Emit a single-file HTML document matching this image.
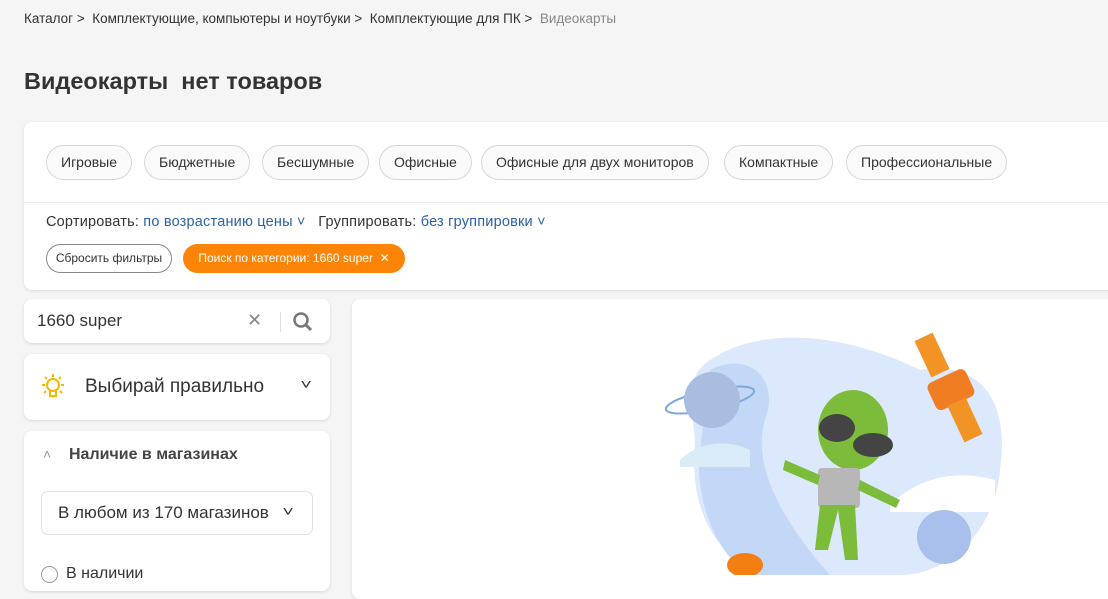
<!DOCTYPE html>
<html><head><meta charset="utf-8"><style>
*{box-sizing:border-box;margin:0;padding:0}
body{width:1108px;height:575px;overflow:hidden;background:#f5f5f5;font-family:"Liberation Sans","Noto Sans CJK SC",sans-serif;color:#333;position:relative}
.abs{position:absolute}
.bc{top:11px;left:24px;font-size:13.5px;color:#333}
.bc span{color:#888}
h1{position:absolute;top:68px;left:24px;font-size:23.5px;font-weight:bold;color:#333}
.card{position:absolute;background:#fff;border-radius:8px;box-shadow:0 1px 3px rgba(0,0,0,.12)}
.tag{position:absolute;top:145px;height:35px;border:1px solid #d6d6d6;border-radius:18px;font-size:14px;line-height:33px;padding:0 14px;color:#333;background:#fafafa}
.lnk{color:#2a61a8}
</style></head><body>
<div class="abs bc">Каталог &gt;&nbsp; Комплектующие, компьютеры и ноутбуки &gt;&nbsp; Комплектующие для ПК &gt;&nbsp; <span>Видеокарты</span></div>
<h1>Видеокарты&nbsp; нет товаров</h1>
<div class="card" style="left:24px;top:122px;width:1100px;height:168px"></div>
<div class="tag" style="left:46px">Игровые</div>
<div class="tag" style="left:144px">Бюджетные</div>
<div class="tag" style="left:262px">Бесшумные</div>
<div class="tag" style="left:379px">Офисные</div>
<div class="tag" style="left:481px">Офисные для двух мониторов</div>
<div class="tag" style="left:724px">Компактные</div>
<div class="tag" style="left:846px">Профессиональные</div>
<div class="abs" style="left:24px;top:202px;width:1084px;border-top:1px solid #eee"></div>
<div class="abs" style="left:46px;top:214px;font-size:14.5px;letter-spacing:0.2px">Сортировать: <span class="lnk">по возрастанию цены ˅</span>&nbsp;&nbsp; Группировать: <span class="lnk">без группировки ˅</span></div>
<div class="abs" style="left:46px;top:244px;width:126px;height:29px;border:1px solid #888;border-radius:15px;font-size:12px;line-height:27px;text-align:center">Сбросить фильтры</div>
<div class="abs" style="left:183px;top:244px;width:222px;height:29px;background:#fc8507;border-radius:15px;font-size:12px;line-height:29px;text-align:center;color:#fff">Поиск по категории: 1660 super&nbsp; ✕</div>
<div class="card" style="left:24px;top:299px;width:306px;height:44px"></div>
<div class="abs" style="left:37px;top:311px;font-size:17px">1660 super</div>
<div class="abs" style="left:247px;top:310px;font-size:18px;color:#888">✕</div>
<div class="abs" style="left:280px;top:312px;height:20px;border-left:1px solid #ddd"></div>
<svg class="abs" style="left:292px;top:311px" width="22" height="22"><circle cx="9" cy="9" r="6.5" fill="none" stroke="#777" stroke-width="2.5"/><line x1="14" y1="14" x2="19" y2="19" stroke="#777" stroke-width="3"/></svg>
<div class="card" style="left:24px;top:354px;width:306px;height:66px"></div>
<svg class="abs" style="left:38px;top:372px" width="30" height="30"><g stroke="#f5b800" stroke-width="2" fill="none"><circle cx="15" cy="13" r="6"/><path d="M12 19v5h6v-5M15 2v3M4 13h3M23 13h3M7 5l2 2M23 5l-2 2M6 21l2-2M24 21l-2-2"/></g></svg>
<div class="abs" style="left:85px;top:376px;font-size:19px">Выбирай правильно</div>
<div class="abs" style="left:302px;top:376px;font-size:14px;transform:scaleX(1.4)">˅</div>
<div class="card" style="left:24px;top:431px;width:306px;height:160px"></div>
<div class="abs" style="left:43px;top:446px;font-size:14px;color:#999">˄</div>
<div class="abs" style="left:69px;top:446px;font-size:16px;font-weight:bold;color:#444">Наличие в магазинах</div>
<div class="abs" style="left:41px;top:491px;width:272px;height:44px;border:1px solid #e0e0e0;border-radius:7px;font-size:17px;line-height:42px;padding-left:16px">В любом из 170 магазинов</div>
<div class="abs" style="left:284px;top:503px;font-size:14px;transform:scaleX(1.4)">˅</div>
<div class="abs" style="left:41px;top:566px;width:17px;height:17px;border:1px solid #999;border-radius:50%"></div>
<div class="abs" style="left:66px;top:565px;font-size:16px">В наличии</div>
<div class="card" style="left:352px;top:299px;width:780px;height:300px"></div>
<svg class="abs" style="left:600px;top:300px" width="440" height="275">
<path d="M110 60 C170 20 260 40 320 70 C380 60 410 100 400 170 C395 230 350 275 300 275 L170 275 C110 260 90 200 95 150 C95 110 80 80 110 60Z" fill="#dce8fb"/>
<path d="M110 70 C150 50 180 80 165 120 C150 170 190 230 230 275 L150 275 C110 250 95 190 100 150Z" fill="#c3d7f7"/>
<ellipse cx="110" cy="100" rx="45" ry="10" fill="none" stroke="#7ea8e0" stroke-width="2" transform="rotate(-12 110 100)"/>
<circle cx="112" cy="100" r="28" fill="#a8bde0"/>
<path d="M80 160 C100 140 130 140 150 150 L150 167 L80 167Z" fill="#d9ecf7"/>
<path d="M290 205 C320 175 360 170 395 180 L395 212 L290 212Z" fill="#fff"/>
<circle cx="344" cy="237" r="27" fill="#a9c0ec"/>
<rect x="330" y="75" width="42" height="30" rx="6" fill="#f07c24" transform="rotate(-25 350 90)"/>
<rect x="322" y="35" width="20" height="40" fill="#f29326" transform="rotate(-25 332 55)"/>
<rect x="355" y="100" width="20" height="40" fill="#f29326" transform="rotate(-25 365 120)"/>
<ellipse cx="253" cy="130" rx="35" ry="40" fill="#7dbb3b"/>
<ellipse cx="237" cy="128" rx="18" ry="14" fill="#444"/>
<ellipse cx="273" cy="145" rx="20" ry="12" fill="#444"/>
<rect x="218" y="168" width="42" height="40" rx="4" fill="#b7b7b7"/>
<path d="M220 205 L215 250 L228 250 L238 210 L245 260 L258 260 L255 205Z" fill="#7dbb3b"/>
<path d="M185 160 L220 175 L218 185 L183 170Z M260 180 L300 200 L296 208 L258 190Z" fill="#7dbb3b"/>
<ellipse cx="145" cy="265" rx="18" ry="12" fill="#f57e12"/>
</svg>
</body></html>
